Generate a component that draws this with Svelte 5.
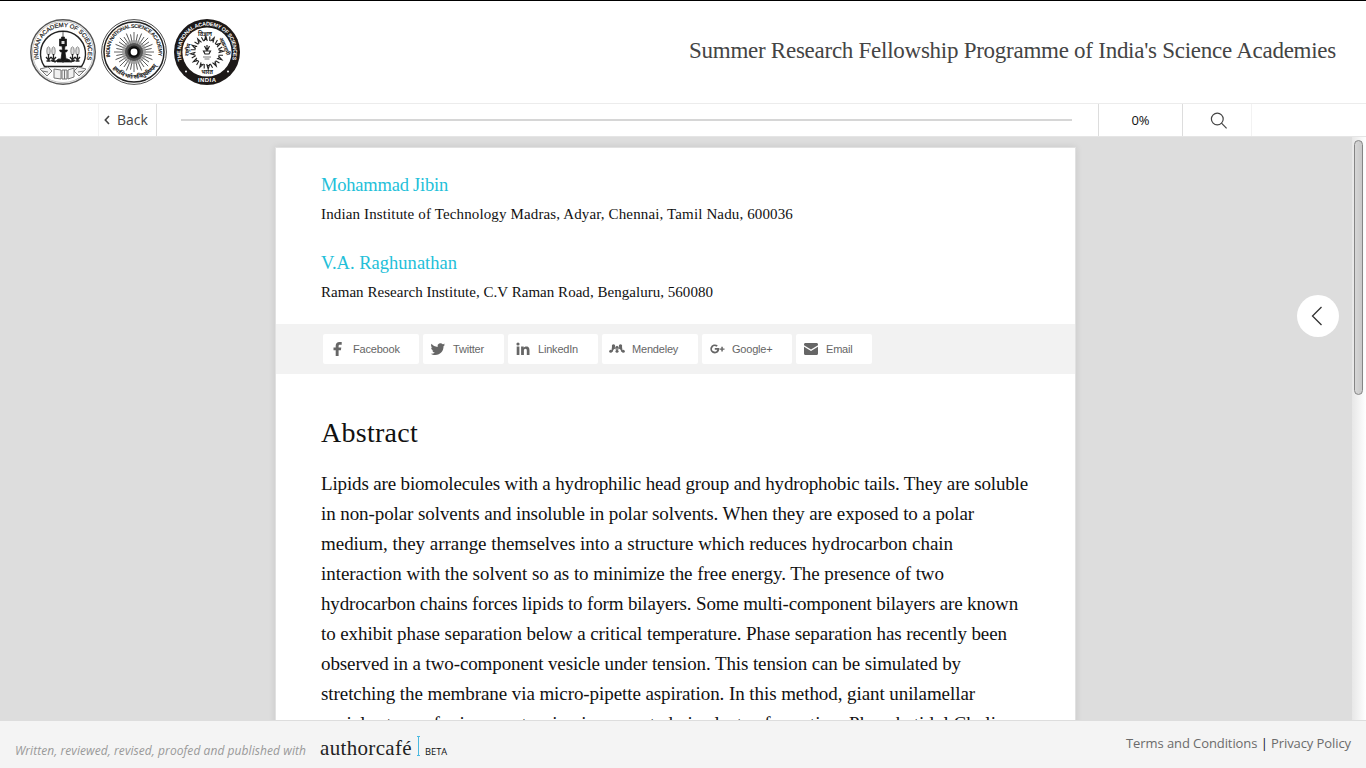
<script>
  const authors = [
    { name: 'Mohammad Jibin', w: 127, place: 'Indian Institute of Technology Madras, Adyar, Chennai, Tamil Nadu, 600036', pw: 472 },
    { name: 'V.A. Raghunathan', w: 136, place: 'Raman Research Institute, C.V Raman Road, Bengaluru, 560080', pw: 392 }
  ];
  const lines = [
    ['Lipids are biomolecules with a hydrophilic head group and hydrophobic tails. They are soluble', 707],
    ['in non-polar solvents and insoluble in polar solvents. When they are exposed to a polar', 653],
    ['medium, they arrange themselves into a structure which reduces hydrocarbon chain', 632],
    ['interaction with the solvent so as to minimize the free energy. The presence of two', 623],
    ['hydrocarbon chains forces lipids to form bilayers. Some multi-component bilayers are known', 697],
    ['to exhibit phase separation below a critical temperature. Phase separation has recently been', 686],
    ['observed in a two-component vesicle under tension. This tension can be simulated by', 640],
    ['stretching the membrane via micro-pipette aspiration. In this method, giant unilamellar', 654],
    ['vesicles type of micron extension is generated via electro-formation. Phosphatidyl Choline', 693]
  ];
  const shares = [
    { label: 'Facebook', w: 96, d: 'M11.700 1H9.500C7.100 1 5.700 2.500 5.700 4.800v1.800H3.500v2.600h2.200V15h2.900V9.200h2.300l.4-2.600H8.600V5.100c0-.8.3-1.400 1.400-1.400h1.700z' },
    { label: 'Twitter', w: 81, d: 'M15 3.600c-.5.2-1.100.4-1.700.5.600-.4 1.100-.9 1.300-1.600-.6.300-1.200.6-1.900.7A3 3 0 0 0 7.600 5.900C5.100 5.800 2.900 4.600 1.500 2.800c-.8 1.400-.4 3.100.9 4-.5 0-.9-.1-1.300-.4 0 1.400 1 2.700 2.400 3-.4.1-.9.1-1.300 0 .4 1.200 1.500 2 2.800 2.100A6 6 0 0 1 .7 12.700c1.300.8 2.800 1.300 4.500 1.300 5.400 0 8.500-4.600 8.300-8.800.6-.4 1.100-1 1.500-1.600z' },
    { label: 'LinkedIn', w: 90, d: 'M1.700 5.600h2.700V14H1.700zM3 1.400a1.600 1.600 0 1 1 0 3.200 1.600 1.600 0 0 1 0-3.200zM6.100 5.600h2.600v1.200c.4-.8 1.300-1.400 2.600-1.400 2.700 0 3.200 1.800 3.200 4.100V14h-2.700v-4c0-1 0-2.200-1.300-2.200-1.400 0-1.600 1-1.600 2.100V14H6.100z' },
    { label: 'Mendeley', w: 96, dots: true, d: 'M3.200 4.500L6 5.800h4l2.800-1.300.9 6-1.500.2c-.3-1.700-.9-2.500-1.900-2.900L8.500 9h-1L5.700 7.800c-1 .4-1.600 1.200-1.900 2.900l-1.500-.2z' },
    { label: 'Google+', w: 90, d: 'M5.800 7.100h4.400c.5 3-1.400 5.300-4.400 5.300a4.500 4.500 0 1 1 3-7.900L7.500 5.800a2.700 2.700 0 1 0 .8 3H5.800zM12.300 5.700h1.500v1.700h1.700v1.400h-1.700v1.700h-1.500V8.800h-1.600V7.400h1.600z' },
    { label: 'Email', w: 76, d: 'M1 4.300V3.500C1 2.700 1.600 2 2.400 2h11.200c.8 0 1.400.7 1.400 1.500v.8L8 8.500zM1 5.800v6.700c0 .8.600 1.500 1.400 1.500h11.200c.8 0 1.400-.7 1.400-1.500V5.800L8 10z' }
  ];
  const dots = [[4.5, 5, 1.7], [8, 6.3, 1.5], [11.5, 5, 1.7], [1.7, 10.3, 1.5], [8, 10.3, 1.5], [14.3, 10.3, 1.5]];
  const range = (n) => Array.from({ length: n }, (_, i) => i);

  function fit(node, target) {
    const width = node.getBoundingClientRect().width;
    node.style.letterSpacing = (target - width) / node.textContent.length + 'px';
  }
</script>

<div class="app">
  <header>
    <div class="logos">
      <svg width="66" height="66" viewBox="0 0 66 66">
        <defs><path id="arc1" d="M9.300 41A25 25 0 1 1 56.700 41" /></defs>
        <circle cx="33" cy="33" r="32.200" fill="#fff" stroke="#555" stroke-width="1.500" />
        <circle cx="33" cy="33" r="30.600" fill="none" stroke="#999" stroke-width=".6" />
        <text class="ring first"><textPath href="#arc1" textLength="93" startOffset="1">INDIAN ACADEMY OF SCIENCES</textPath></text>
        <path d="M14.500 47.500A22.500 22.500 0 1 1 51.500 47.500Z" fill="#fff" stroke="#222" stroke-width="1.400" />
        <path d="M33 12v7M31.500 18h3v2h2v7h-1.500l-.5 4h3l-1 2h-1.500l1 7 4 1v2h-13v-2l4-1 1-7h-1.500l-1-2h3l-.5-4H29.500v-7h2z" fill="#171717" stroke="#171717" stroke-width=".7" />
        <path d="M31.500 22h3v3h-3z" fill="#ddd" />
        {#each [18.5, 23.5, 42.5, 47.5] as x}
          <ellipse cx={x} cy="32" rx="1.700" ry="4.200" fill="#ddd" stroke="#777" stroke-width=".8" />
          <path d="M{x} 35v5M{x - 2.5} 38l2.500 3 2.500-3M{x - 2} 42h4" fill="none" stroke="#222" stroke-width="1.300" />
        {/each}
        <path d="M21 41l4 2 4-3 4 3 4-3 4 3 4-2" fill="none" stroke="#222" stroke-width="1.300" />
        <path d="M24 50l7 1v9l-7-1zM32 51h5v9h-5zM38 51l6-2v9l-6 2zM34.500 51v9M10 50l8-2 4 4-5 5zM56 50l-8-2-4 4 5 5zM12 52l6 1M54 52l-6 1" fill="#f1f1f1" stroke="#777" stroke-width="1" />
      </svg>
      <svg width="66" height="66" viewBox="0 0 66 66">
        <defs>
          <path id="arc2" d="M9.200 38A24.300 24.300 0 1 1 56.800 38" />
          <path id="arc2b" d="M8.500 44A27 27 0 0 0 57.500 44" />
        </defs>
        <circle cx="33" cy="33" r="32.400" fill="#fff" stroke="#333" stroke-width=".9" />
        <circle cx="33" cy="33" r="30" fill="none" stroke="#222" stroke-width="1.500" />
        <text class="ring bold narrow"><textPath href="#arc2" textLength="85">INDIAN NATIONAL SCIENCE ACADEMY</textPath></text>
        {#each range(32) as i}
          <path d="M33 26V{i % 2 ? 15 : 13}" stroke="#333" stroke-width=".75" transform="rotate({i * 11.25} 33 33)" />
        {/each}
        <circle cx="33" cy="33" r="12" fill="#999" fill-opacity=".7" />
        <circle cx="33" cy="33" r="9" fill="#555" />
        <circle cx="33" cy="33" r="6.500" fill="#222" />
        <circle cx="33" cy="33" r="5" fill="#050505" />
        <circle cx="33" cy="33" r="3.400" fill="#fff" />
        <text class="hindi"><textPath href="#arc2b" startOffset="6" textLength="52">हयामि भर्गः सवितुर्वरेण्यम्</textPath></text>
      </svg>
      <svg width="66" height="66" viewBox="0 0 66 66">
        <defs><path id="arc3" d="M8.500 42.500A26.300 26.300 0 1 1 57.500 42.500" /></defs>
        <circle cx="33" cy="33" r="33" fill="#1d1918" />
        <circle cx="33" cy="33" r="24.600" fill="#fff" />
        <text class="ring white bold narrow"><textPath href="#arc3" textLength="99" startOffset="1">THE NATIONAL ACADEMY OF SCIENCES</textPath></text>
        <text x="33" y="63" class="india" textLength="18">INDIA</text>
        <circle cx="12" cy="52.500" r="1" fill="#fff" /><circle cx="54" cy="52.500" r="1" fill="#fff" />
        {#each range(12) as i}
          <path d="M30.300 22l1.500-5 1.500 5M30.700 20.500h2.300M35.800 17.500v4.500" fill="none" stroke="#222" stroke-width="1.100" transform="rotate({i * 30} 33 33.5)" />
        {/each}
        <path d="M29.500 32h7l-1.500 3h-4zM33 32v-6M30.500 27l2 4M35.500 27l-2 4" fill="none" stroke="#222" stroke-width="1.200" />
        <path d="M29 38h8M30.500 40h5" stroke="#777" />
        <text x="31" y="16.500" class="hindi mid">विज्ञान</text>
        <text x="33" y="55" class="hindi mid">भारत</text>
        <text x="0" y="0" class="hindi mid" transform="translate(15.5 31) rotate(-80)">राष्ट्रीय</text>
        <text x="0" y="0" class="hindi mid" transform="translate(49 28) rotate(66)">अकादमी</text>
      </svg>
    </div>
    <h1><span use:fit={647}>Summer Research Fellowship Programme of India's Science Academies</span></h1>
  </header>

  <nav>
    <div class="tools">
      <div class="back">
        <svg width="6" height="10" viewBox="0 0 6 10"><path d="M5 1L1.300 5 5 9" fill="none" stroke="#444" stroke-width="1.600" /></svg>
        <span>Back</span>
      </div>
      <div class="progress"><div></div></div>
      <div class="percent">0%</div>
      <div class="search">
        <svg width="18" height="18" viewBox="0 0 18 18"><circle cx="7.300" cy="7" r="5.900" /><path d="M11.500 11.200L16.600 16.300" /></svg>
      </div>
    </div>
  </nav>

  <main>
    <article>
      <section class="authors">
        {#each authors as a}
          <h3><span use:fit={a.w}>{a.name}</span></h3>
          <p><span use:fit={a.pw}>{a.place}</span></p>
        {/each}
      </section>
      <div class="shares">
        {#each shares as s}
          <div class="share" style="width: {s.w}px">
            <svg width="16" height="16" viewBox="0 0 16 16">
              <path d={s.d} />
              {#if s.dots}
                {#each dots as [x, y, r]}<circle cx={x} cy={y} {r} />{/each}
                <circle cx="8" cy="6.300" r="1.800" fill="none" stroke="#fff" stroke-width=".4" />
              {/if}
            </svg>
            <span>{s.label}</span>
          </div>
        {/each}
      </div>
      <section class="abstract">
        <h2><span use:fit={97}>Abstract</span></h2>
        {#each lines as [text, w]}
          <div class="line"><span use:fit={w}>{text}</span></div>
        {/each}
      </section>
    </article>
    <div class="scroll"><div></div></div>
    <div class="toggle">
      <svg width="12" height="20" viewBox="0 0 12 20"><path d="M10.500 1L1.500 10l9 9" fill="none" stroke="#333" stroke-width="1.300" /></svg>
    </div>
  </main>

  <footer>
    <em><span use:fit={291}>Written, reviewed, revised, proofed and published with</span></em>
    <div class="brand">
      <span class="name"><span use:fit={92}>authorcafé</span></span>
      <svg width="5" height="20" viewBox="0 0 5 20"><path d="M1 .5h3M2.500 .5v19M1 19.500h3" stroke="#4bb9e0" stroke-width="1" /></svg>
      <span class="beta">BETA</span>
    </div>
    <div class="legal"><span use:fit={225}>Terms and Conditions <b>|</b> Privacy Policy</span></div>
  </footer>
</div>

<style>
  :global(body) { background: #fff; overflow: hidden; }
  .app { width: 1366px; height: 768px; display: flex; flex-direction: column; overflow: hidden; box-sizing: border-box; border-top: 1px solid #000; font-family: "Open Sans", sans-serif; color: #111; }
  header { height: 102px; flex: none; display: flex; justify-content: space-between; padding: 0 30px; border-bottom: 1px solid #ececec; }
  .logos { display: flex; padding-top: 18px; }
  .logos svg { display: block; }
  .logos svg:nth-child(2) { margin: 0 7px 0 5px; }
  .ring { font: 5.700px "Liberation Sans", sans-serif; fill: #222; }
  .first { font-size: 6px; stroke: #222; stroke-width: .2px; }
  .bold { font-weight: bold; font-size: 5.400px; }
  .narrow { font-family: "Liberation Sans Narrow", "Liberation Sans", sans-serif; }
  .white { fill: #fff; }
  .india { font: bold 6px "Liberation Sans", sans-serif; fill: #fff; text-anchor: middle; }
  .hindi { font: bold 6px "Noto Sans", sans-serif; fill: #222; }
  .mid { text-anchor: middle; font-size: 5.500px; }
  h1 { margin: 0; padding-top: 35px; font: 23px/30px "Liberation Serif", serif; color: #444; white-space: nowrap; }
  h1 span, h2 span, h3 span, p span, .line span, em span, .name span, .legal > span { display: inline-block; white-space: nowrap; }
  nav { height: 32px; flex: none; border-bottom: 1px solid #e5e5e5; display: flex; justify-content: center; padding-right: 16px; }
  .tools { width: 1154px; box-sizing: border-box; display: flex; border: solid #f2f2f2; border-width: 0 1px; }
  .back { width: 58px; border-right: 1px solid #ddd; display: flex; align-items: center; gap: 7px; padding: 0 0 1px 5px; box-sizing: border-box; font-size: 14px; color: #444; }
  .progress { flex: 1; display: flex; align-items: center; padding: 0 26px 0 24px; }
  .progress div { height: 2px; flex: 1; background: #d6d6d6; }
  .percent { width: 83px; border: solid #ddd; border-width: 0 1px; display: flex; align-items: center; justify-content: center; font-size: 13px; color: #111; }
  .search { width: 68px; display: flex; align-items: center; justify-content: center; padding: 2px 0 0 4px; box-sizing: border-box; }
  .search svg { fill: none; stroke: #444; stroke-width: 1.200; }
  main { flex: 1; min-height: 0; position: relative; display: flex; justify-content: space-between; background: #ddd; overflow: hidden; }
  article { width: 799px; height: 700px; margin: 11px 0 0 276px; background: #fff; box-shadow: 0 0 0 1px #e1e1e1, 0 0 7px 1px rgba(0,0,0,.1); }
  .authors { height: 176px; padding: 22px 45px 0; box-sizing: border-box; }
  h3 { margin: 0; font: 18.500px/30px "Liberation Serif", serif; color: #23bfd9; }
  p { margin: 0 0 20px; font: 15px/28px "Liberation Serif", serif; color: #111; }
  .shares { height: 50px; background: #f2f2f2; display: flex; gap: 4px; padding: 10px 47px; box-sizing: border-box; }
  .share { height: 30px; box-sizing: border-box; background: #fff; border-radius: 2px; display: flex; align-items: center; gap: 7px; padding-left: 7px; font: 11px "Liberation Sans", sans-serif; letter-spacing: -.2px; color: #666; }
  .share svg { fill: #666; flex: none; }
  .abstract { padding: 39px 45px 0; }
  h2 { margin: 0 0 16px; font: 28px/40px "Liberation Serif", serif; color: #111; }
  .line { height: 30px; font: 19px/30px "Liberation Serif", serif; color: #111; }
  .scroll { width: 14px; background: linear-gradient(90deg, #e7e7e7, #fff); display: flex; justify-content: center; padding: 3px 1px 0 0; box-sizing: border-box; }
  .scroll div { width: 9px; height: 255px; box-sizing: border-box; border: 1px solid #858585; border-radius: 5px; background: linear-gradient(90deg, #d6d6d6, #c8c8c8); }
  .toggle { position: absolute; left: 1297px; top: 158px; width: 42px; height: 42px; border-radius: 50%; background: #fff; display: flex; align-items: center; justify-content: center; padding-right: 2px; box-sizing: border-box; }
  footer { height: 48px; flex: none; box-sizing: border-box; border-top: 1px solid #ddd; background: #f4f4f4; display: flex; padding: 0 15px; }
  em { padding-top: 20px; font-size: 12px; line-height: 20px; color: #999; }
  .brand { display: flex; margin-left: 14px; }
  .name { font: 21px/24px "Liberation Serif", serif; padding-top: 15px; color: #222; }
  .brand svg { margin: 15px 0 0 4px; }
  .beta { font: 9.300px/14px "Open Sans", sans-serif; padding: 24px 0 0 4px; color: #111; }
  .legal { margin-left: auto; padding-top: 12px; font-size: 13px; line-height: 20px; color: #6b6b6b; }
  .legal b { color: #111; font-weight: 400; }
</style>
